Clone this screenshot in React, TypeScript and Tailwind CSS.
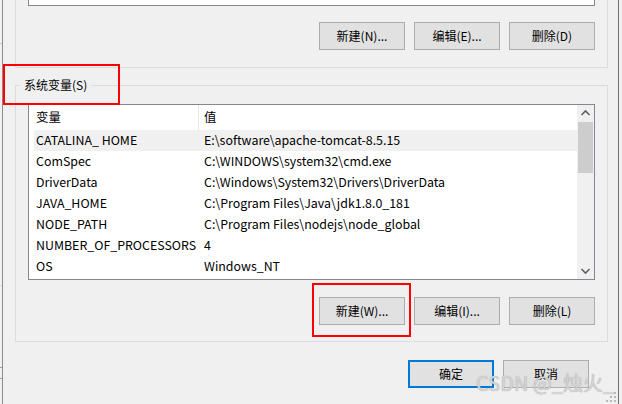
import React from 'react';

const rows = [
  { name: 'CATALINA_ HOME', value: 'E:\\software\\apache-tomcat-8.5.15', selected: true },
  { name: 'ComSpec', value: 'C:\\WINDOWS\\system32\\cmd.exe' },
  { name: 'DriverData', value: 'C:\\Windows\\System32\\Drivers\\DriverData' },
  { name: 'JAVA_HOME', value: 'C:\\Program Files\\Java\\jdk1.8.0_181' },
  { name: 'NODE_PATH', value: 'C:\\Program Files\\nodejs\\node_global' },
  { name: 'NUMBER_OF_PROCESSORS', value: '4' },
  { name: 'OS', value: 'Windows_NT' },
];

function WinButton({ label, focused = false }: { label: string; focused?: boolean }) {
  return (
    <button
      className={
        focused
          ? 'w-[86px] h-[28px] bg-[#e1e1e1] border-2 border-[#0078d7] text-[12px] text-black flex items-center justify-center'
          : 'w-[86px] h-[28px] bg-[#e1e1e1] border border-[#adadad] text-[12px] text-black flex items-center justify-center'
      }
    >
      {label}
    </button>
  );
}

function Chevron({ down = false }: { down?: boolean }) {
  return (
    <svg width="17" height="17" viewBox="0 0 17 17">
      <polyline
        points={down ? '4.5,7 8.5,11 12.5,7' : '4.5,10 8.5,6 12.5,10'}
        fill="none"
        stroke="#606060"
        strokeWidth="1.6"
      />
    </svg>
  );
}

export default function App() {
  return (
    <div className="w-[622px] h-[404px] bg-[#f0f0f0] flex overflow-hidden relative font-['Noto_Sans_CJK_SC',sans-serif] text-black">
      {/* window behind, left edge */}
      <div className="w-[2px] flex flex-col">
        <div className="h-[43px]" />
        <div className="h-[1px] bg-[#c8c8c8]" />
        <div className="h-[241px]" />
        <div className="h-[1px] bg-[#dcdcdc]" />
        <div className="h-[81px]" />
        <div className="h-[1px] bg-[#a0a0a0]" />
        <div className="h-[10px]" />
        <div className="h-[1px] bg-[#a0a0a0]" />
      </div>
      <div className="w-[1px] bg-[#8c8c8c]" />

      {/* dialog */}
      <div className="flex-1 flex flex-col">
        {/* user variables group (cut off on top) */}
        <div className="ml-[12px] w-[593px] border-x border-b border-[#dcdcdc] pb-[17px]">
          <div className="ml-[12px] w-[567px] h-[6px] bg-white border-x border-b border-[#828790]" />
          <div className="ml-[12px] w-[567px] mt-[16px] flex justify-end gap-[9px]">
            <WinButton label="新建(N)..." />
            <WinButton label="编辑(E)..." />
            <WinButton label="删除(D)" />
          </div>
        </div>

        {/* system variables group */}
        <div className="relative ml-[12px] w-[593px] mt-[17px] border border-[#dcdcdc] pb-[16px]">
          <span className="absolute left-[4px] top-[-10px] px-[4px] bg-[#f0f0f0] text-[12px] leading-[18px]">
            系统变量(S)
          </span>
          <div className="ml-[12px] mt-[18px] w-[567px] h-[176px] bg-white border border-[#828790] flex">
            <div className="flex-1 flex flex-col">
              <div className="h-[25px] flex text-[12.4px]">
                <div className="w-[169px] pl-[7px] flex items-center">变量</div>
                <div className="w-[1px] bg-[#e5e5e5]" />
                <div className="pl-[5px] flex items-center">值</div>
              </div>
              <div className="pl-[5px] flex flex-col">
                {rows.map((r) => (
                  <div
                    key={r.name}
                    className={
                      r.selected
                        ? 'h-[21px] flex items-center text-[12.4px] bg-[#f0f0f0]'
                        : 'h-[21px] flex items-center text-[12.4px]'
                    }
                  >
                    <div className="w-[170px] pl-[2px] whitespace-nowrap">{r.name}</div>
                    <div className="whitespace-nowrap">{r.value}</div>
                  </div>
                ))}
              </div>
            </div>
            {/* scrollbar */}
            <div className="w-[17px] bg-[#f0f0f0] flex flex-col">
              <Chevron />
              <div className="mx-[1px] h-[51px] bg-[#cdcdcd]" />
              <div className="flex-1" />
              <Chevron down />
            </div>
          </div>
          <div className="ml-[12px] w-[567px] mt-[17px] flex justify-end gap-[9px]">
            <WinButton label="新建(W)..." />
            <WinButton label="编辑(I)..." />
            <WinButton label="删除(L)" />
          </div>
        </div>

        {/* OK / Cancel */}
        <div className="mt-[18px] flex justify-end gap-[9px] pr-[29px]">
          <WinButton label="确定" focused />
          <WinButton label="取消" />
        </div>
      </div>

      <div className="w-[1px] bg-[#707070]" />
      <div className="w-[3px]" />

      {/* red annotations */}
      <div className="absolute left-[3px] top-[64px] w-[117px] h-[41px] border-2 border-[#ff0000]" />
      <div className="absolute left-[312px] top-[283px] w-[99px] h-[54px] border-2 border-[#ff0000]" />

      {/* watermark */}
      <div className="absolute left-[476px] top-[370px] text-[20px] leading-[26px] text-[#d4d4d4] [text-shadow:0_0_1px_#9a9a9a] whitespace-nowrap">
        CSDN @_烛火_
      </div>

      {/* resize grip */}
      <svg className="absolute left-[606px] top-[392px]" width="11" height="11" viewBox="0 0 11 11">
        <rect x="8" y="0" width="2" height="2" fill="#b8b8b8" />
        <rect x="4" y="4" width="2" height="2" fill="#b8b8b8" />
        <rect x="8" y="4" width="2" height="2" fill="#b8b8b8" />
        <rect x="0" y="8" width="2" height="2" fill="#b8b8b8" />
        <rect x="4" y="8" width="2" height="2" fill="#b8b8b8" />
        <rect x="8" y="8" width="2" height="2" fill="#b8b8b8" />
      </svg>
    </div>
  );
}
